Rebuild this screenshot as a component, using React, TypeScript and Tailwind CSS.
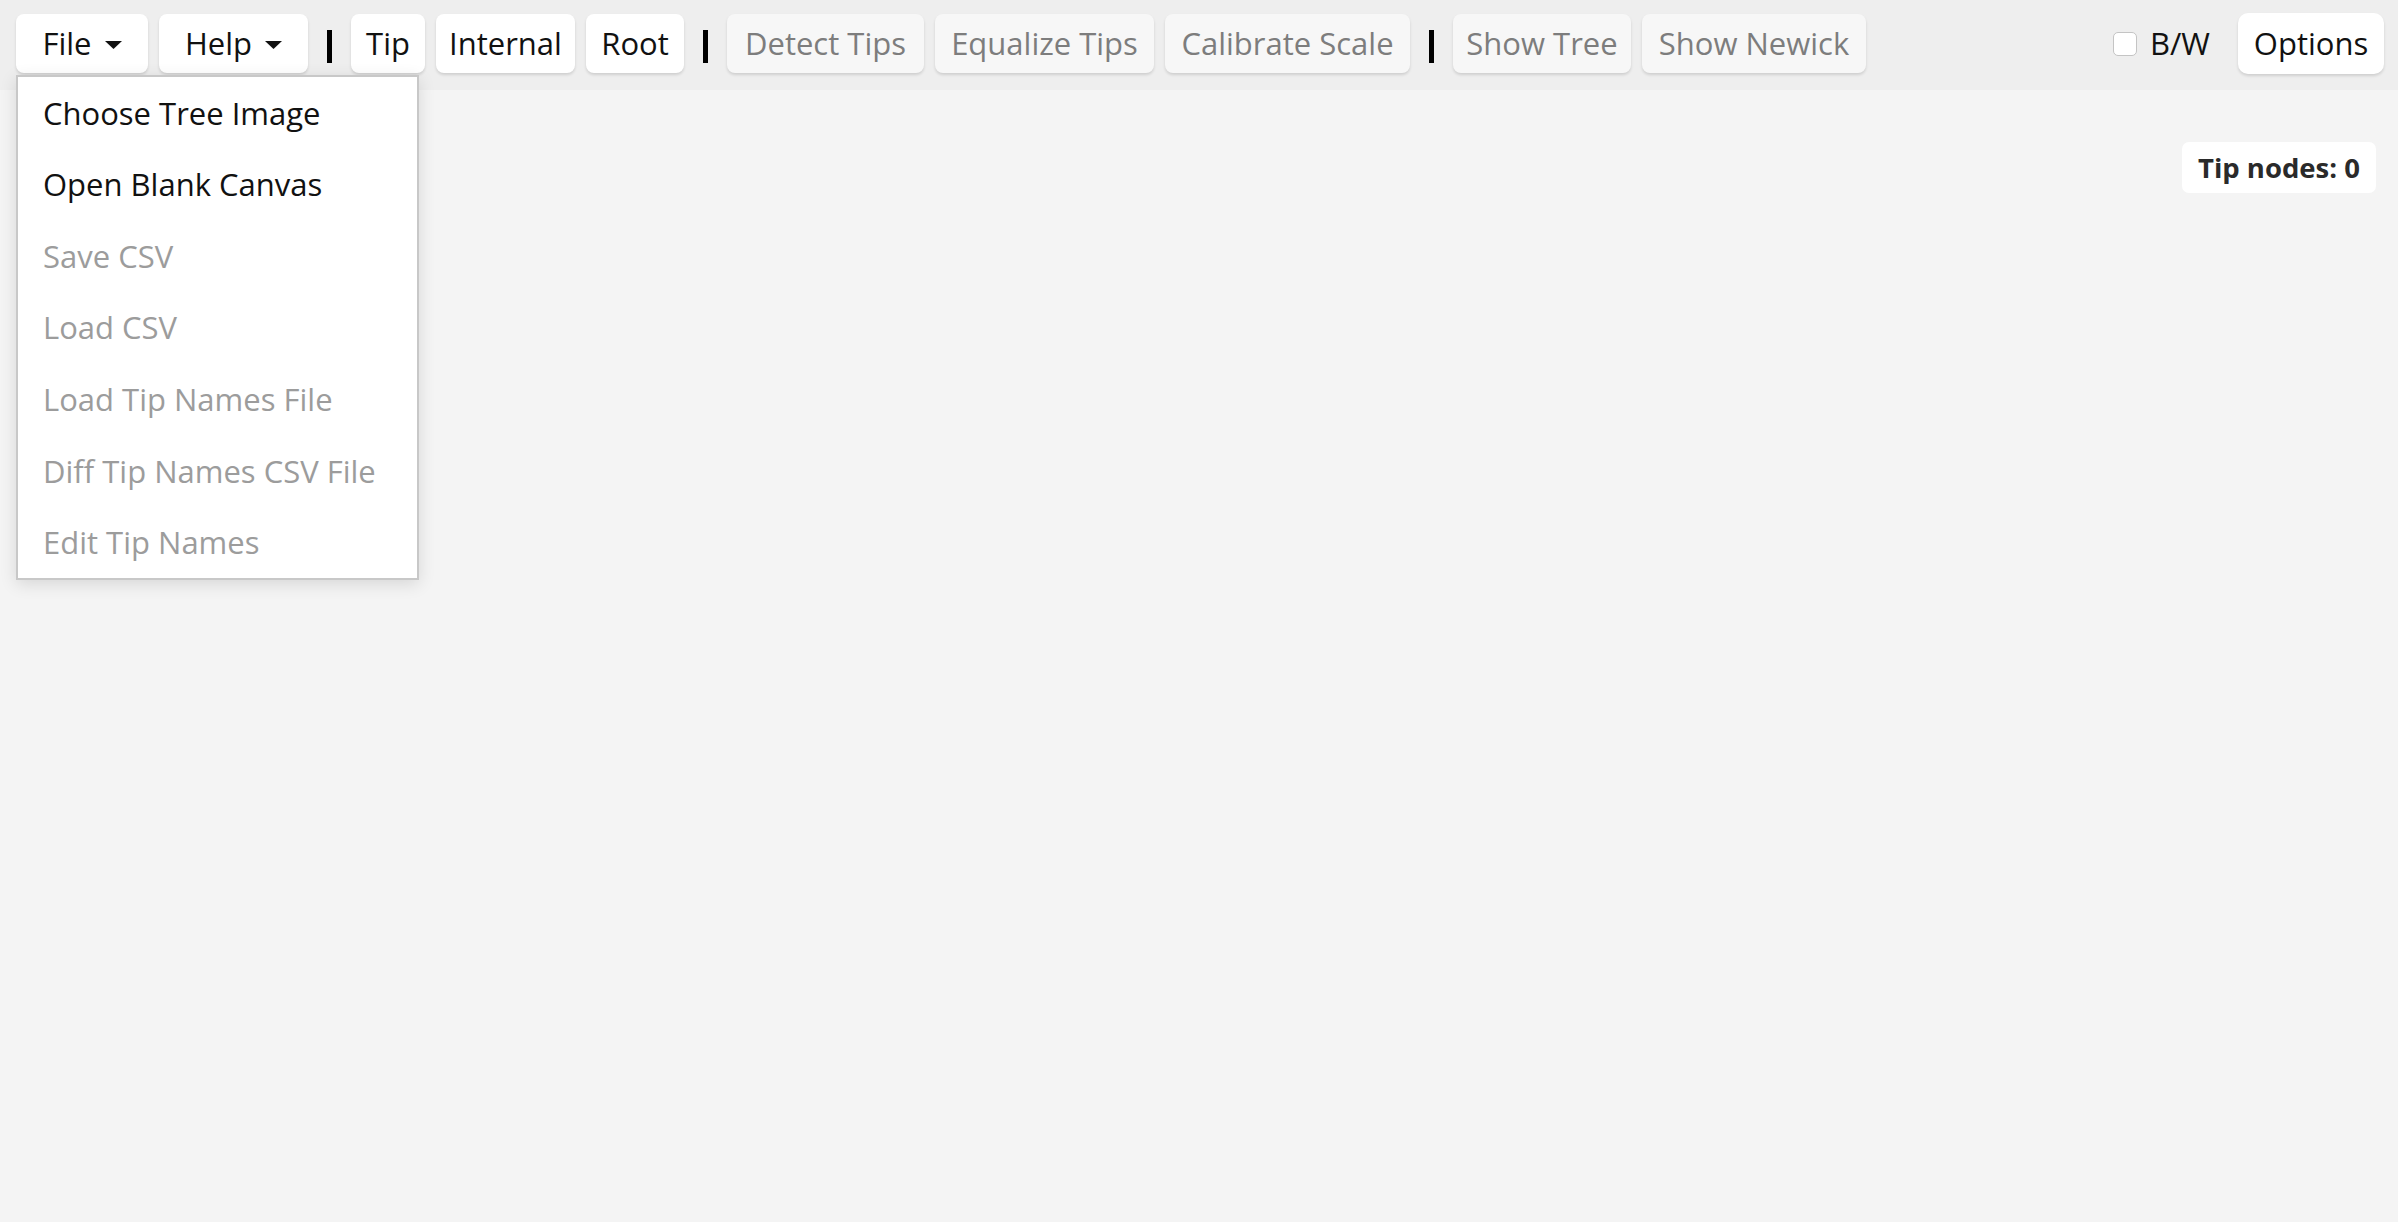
import React from 'react'

type Btn = { label: string; w: string; disabled?: boolean; menu?: boolean }

const GROUPS: Btn[][] = [
  [
    { label: 'File', w: 'w-[132px]', menu: true },
    { label: 'Help', w: 'w-[149px]', menu: true },
  ],
  [
    { label: 'Tip', w: 'w-[74px]' },
    { label: 'Internal', w: 'w-[139px]' },
    { label: 'Root', w: 'w-[98px]' },
  ],
  [
    { label: 'Detect Tips', w: 'w-[197px]', disabled: true },
    { label: 'Equalize Tips', w: 'w-[219px]', disabled: true },
    { label: 'Calibrate Scale', w: 'w-[245px]', disabled: true },
  ],
  [
    { label: 'Show Tree', w: 'w-[178px]', disabled: true },
    { label: 'Show Newick', w: 'w-[224px]', disabled: true },
  ],
]

const FILE_MENU = [
  { label: 'Choose Tree Image' },
  { label: 'Open Blank Canvas' },
  { label: 'Save CSV', disabled: true },
  { label: 'Load CSV', disabled: true },
  { label: 'Load Tip Names File', disabled: true },
  { label: 'Diff Tip Names CSV File', disabled: true },
  { label: 'Edit Tip Names', disabled: true },
]

function Caret() {
  return (
    <svg width="17" height="8" viewBox="0 0 17 8" className="mt-[3px]">
      <path d="M0 0 H17 L8.5 8 Z" fill="currentColor" />
    </svg>
  )
}

function ToolButton({ b }: { b: Btn }) {
  return (
    <button
      className={`${b.w} h-[59px] shrink-0 flex items-center justify-center gap-[13px] rounded-[8px] text-[31px] shadow-[0_2px_3px_rgba(0,0,0,0.13)] ${
        b.disabled ? 'bg-[#f7f7f7] text-[#7d7d7d]' : 'bg-white text-[#111]'
      }`}
    >
      <span>{b.label}</span>
      {b.menu && <Caret />}
    </button>
  )
}

function Sep() {
  return <span className="shrink-0 mx-[8px] mt-[5px] w-[5px] h-[33px] bg-black" />
}

export default function App() {
  return (
    <div className="relative min-h-screen h-[1222px] bg-[#f4f4f4] font-['Open_Sans',sans-serif] overflow-hidden">
      <div className="h-[90px] bg-[#eeeeee] flex items-start pt-[14px] pl-[16px] pr-[14px]">
        <div className="flex items-center gap-[11px]">
          {GROUPS.map((g, i) => (
            <React.Fragment key={i}>
              {i > 0 && <Sep />}
              {g.map((b) => (
                <ToolButton key={b.label} b={b} />
              ))}
            </React.Fragment>
          ))}
        </div>
        <div className="ml-auto flex items-center h-[59px]">
          <span className="w-[24px] h-[24px] rounded-[5px] border border-[#c4c4c4] bg-white" />
          <span className="ml-[13px] text-[31px] text-[#111]">B/W</span>
          <button className="ml-[28px] w-[146px] h-[61px] rounded-[10px] bg-white text-[31px] text-[#111] shadow-[0_2px_3px_rgba(0,0,0,0.13)]">
            Options
          </button>
        </div>
      </div>

      {/* file dropdown */}
      <div className="absolute left-[16px] top-[75px] w-[403px] h-[505px] overflow-hidden bg-white border-2 border-[#c8c8c8] shadow-[0_4px_16px_rgba(0,0,0,0.12)]">
        {FILE_MENU.map((m) => (
          <div
            key={m.label}
            className={`h-[71.6px] flex items-center pl-[25px] text-[31px] whitespace-nowrap ${
              m.disabled ? 'text-[#9c9c9c]' : 'text-[#111]'
            }`}
          >
            {m.label}
          </div>
        ))}
      </div>

      <div className="absolute right-[22px] top-[142px] h-[51px] px-[16px] flex items-center rounded-[7px] bg-white text-[27.5px] font-bold text-[#2a2a2a]">
        Tip nodes: 0
      </div>
    </div>
  )
}
